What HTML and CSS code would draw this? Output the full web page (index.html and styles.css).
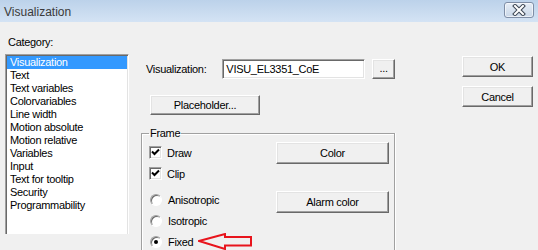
FILE: index.html
```html
<!DOCTYPE html>
<html lang="en">
<head>
    <meta charset="UTF-8">
    <title>Visualization</title>
    <link rel="stylesheet" href="styles.css">
</head>
<body>
    <div class="dialog">
        <header class="titlebar">
            <span class="title">Visualization</span>
            <button class="close" aria-label="close">
                <svg width="16" height="12" viewBox="0 0 16 12">
                    <path d="M4 2 L12 10 M12 2 L4 10" stroke="#3a4452" stroke-width="4" stroke-linecap="square"/>
                    <path d="M4 2 L12 10 M12 2 L4 10" stroke="#fff" stroke-width="2" stroke-linecap="square"/>
                </svg>
            </button>
        </header>
        <div class="content">
            <div class="category">
                <div class="category-label">Category:</div>
                <ul class="listbox">
                    <li class="selected">Visualization</li>
                    <li>Text</li>
                    <li>Text variables</li>
                    <li>Colorvariables</li>
                    <li>Line width</li>
                    <li>Motion absolute</li>
                    <li>Motion relative</li>
                    <li>Variables</li>
                    <li>Input</li>
                    <li>Text for tooltip</li>
                    <li>Security</li>
                    <li>Programmability</li>
                </ul>
            </div>
            <div class="page">
                <div class="vis-row">
                    <label class="vis-label">Visualization:</label>
                    <div class="edit">VISU_EL3351_CoE</div>
                    <button class="btn btn-browse">...</button>
                </div>
                <button class="btn btn-placeholder">Placeholder...</button>
                <fieldset class="frame">
                    <legend>Frame</legend>
                    <div class="frame-body">
                        <div class="options">
                            <div class="opt">
                                <span class="check">
                                    <svg width="9" height="9" viewBox="0 0 9 9"><path d="M1 3.5 L3.5 6 L8 1.5" stroke="#000" stroke-width="2" fill="none"/></svg>
                                </span>
                                Draw
                            </div>
                            <div class="opt">
                                <span class="check">
                                    <svg width="9" height="9" viewBox="0 0 9 9"><path d="M1 3.5 L3.5 6 L8 1.5" stroke="#000" stroke-width="2" fill="none"/></svg>
                                </span>
                                Clip
                            </div>
                            <div class="opt opt-first-radio"><span class="radio"></span>Anisotropic</div>
                            <div class="opt"><span class="radio"></span>Isotropic</div>
                            <div class="opt"><span class="radio on"></span>Fixed
                                <svg class="arrow" width="56" height="18" viewBox="0 0 56 18">
                                    <polygon points="1,8 27,1 27,4 53,4 53,12.5 27,12.5 27,16" fill="none" stroke="#e8141c" stroke-width="2"/>
                                </svg>
                            </div>
                        </div>
                        <div class="frame-buttons">
                            <button class="btn btn-color">Color</button>
                            <button class="btn btn-alarm">Alarm color</button>
                        </div>
                    </div>
                </fieldset>
            </div>
            <div class="actions">
                <button class="btn btn-ok">OK</button>
                <button class="btn btn-cancel">Cancel</button>
            </div>
        </div>
    </div>
</body>
</html>
```

FILE: styles.css
```css
*{padding:0; margin:0; list-style:none; box-sizing:border-box;}
html,body{width:538px; height:250px; overflow:hidden;}
body{
    background:#f0f0f0;
    font-family:"Liberation Sans", Arial, sans-serif;
    font-size:11px; letter-spacing:-0.3px;
    color:#000;
}

.dialog{height:250px; display:flex; flex-direction:column; overflow:hidden;}

/* title bar */
.titlebar{
    height:22px; flex:none;
    display:flex; align-items:center; justify-content:space-between;
    padding:0 4px 0 4px;
    background:linear-gradient(#bcd2ea, #d4e3f4);
}
.title{font-size:12px; letter-spacing:0; color:#3a3a3a; margin-top:1px;}
.close{
    width:30px; height:16px; margin-top:-3px;
    display:flex; align-items:center; justify-content:center;
    border:1px solid #7f8ea6; border-radius:3px;
    background:linear-gradient(#e6edf6, #c9d7e8);
    box-shadow:inset 0 0 0 1px rgba(255,255,255,0.6);
}

.content{display:flex; flex:1; min-height:0; overflow:hidden;}

/* category list */
.category{margin-left:5px; width:124px;}
.category-label{margin-top:14px; line-height:12px; padding-left:3px;}
.listbox{
    margin-top:6px; height:180px;
    background:#fff;
    border:1px solid; border-color:#a0a0a0 #fff #fff #a0a0a0;
    border-bottom:0;
    box-shadow:inset 1px 1px #696969, inset -1px 0 #e3e3e3;
    padding:1px;
}
.listbox li{line-height:13px; padding-left:3px; white-space:nowrap;}
.listbox li.selected{background:#3399ff; color:#fff;}

/* classic buttons */
.btn{
    font:inherit; letter-spacing:inherit; color:#000;
    background:#f0f0f0;
    border:1px solid; border-color:#fff #696969 #696969 #fff;
    box-shadow:inset -1px -1px #a0a0a0, inset 1px 1px #e3e3e3;
    display:flex; align-items:center; justify-content:center;
}

/* middle page */
.page{margin-left:12px; width:254px;}
.vis-row{margin-top:37px; display:flex; align-items:center; height:20px;}
.vis-label{width:82px; padding-left:5px;}
.edit{
    width:144px; height:20px; padding:2px 0 0 3px; line-height:14px;
    background:#fff;
    border:1px solid; border-color:#a0a0a0 #fff #fff #a0a0a0;
    box-shadow:inset 1px 1px #696969, inset -1px -1px #e3e3e3;
}
.btn-browse{width:23px; height:20px; margin-left:7px; padding-bottom:3px;}
.btn-placeholder{margin:16px 0 0 9px; width:110px; height:20px;}

.frame{
    margin-top:12px; width:254px; height:124px;
    border:1px solid #a0a0a0; border-bottom:0;
    box-shadow:1px 0 0 #fff, inset 1px 1px 0 #fff;
    padding:0 5px 0 7px;
}
.frame legend{padding:0 1px; line-height:12px;}
.frame-body{display:flex; justify-content:space-between;}

.options{padding-top:3px;}
.opt{height:21px; display:flex; align-items:center; white-space:nowrap;}
.opt-first-radio{margin-top:5px;}
.check{
    width:13px; height:13px; margin-right:5px;
    display:flex; align-items:center; justify-content:center;
    background:#fff;
    border:1px solid; border-color:#a0a0a0 #fff #fff #a0a0a0;
    box-shadow:inset 1px 1px #696969, inset -1px -1px #e3e3e3;
}
.radio{
    width:12px; height:12px; margin:0 6px 0 1px;
    display:flex; align-items:center; justify-content:center;
    border-radius:50%; background:#fff;
    border:1px solid; border-color:#a0a0a0 #fff #fff #a0a0a0;
    box-shadow:inset 1px 1px #696969;
}
.radio.on:after{content:''; width:4px; height:4px; border-radius:50%; background:#000;}
.arrow{margin-left:5px; flex:none;}

.frame-buttons{padding-top:3px; width:113px;}
.btn-color{width:113px; height:22px;}
.btn-alarm{width:113px; height:22px; margin-top:27px;}

/* ok / cancel */
.actions{margin-left:67px; padding-top:34px;}
.btn-ok{width:71px; height:21px;}
.btn-cancel{width:71px; height:21px; margin-top:9px;}
```
